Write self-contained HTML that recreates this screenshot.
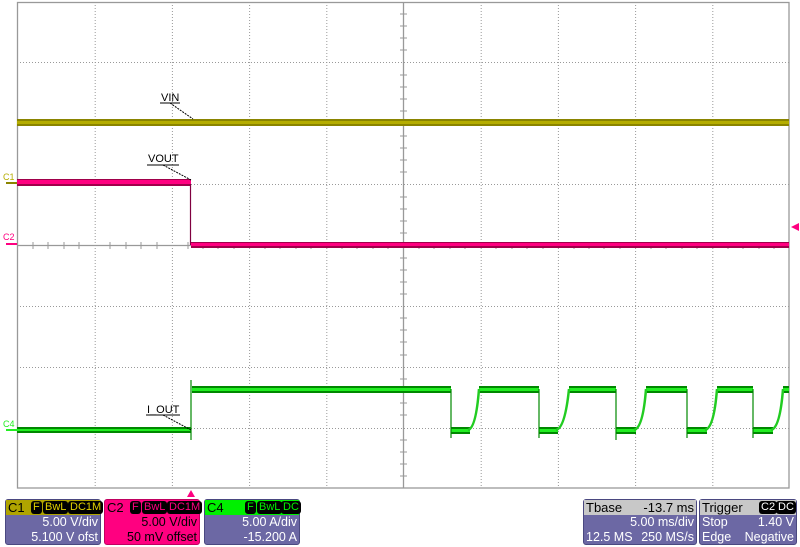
<!DOCTYPE html>
<html><head><meta charset="utf-8"><style>
html,body{margin:0;padding:0;background:#fff;width:800px;height:547px;overflow:hidden;font-family:"Liberation Sans",sans-serif;}
.box{position:absolute;top:499px;height:46px;background:#6c68a4;border-radius:3px;color:#fff;font-size:12.5px;box-sizing:border-box;border:1px solid #4a4880}
.hd{height:15px;line-height:15px;font-size:13px;padding-left:2px;position:relative}
.r{text-align:right;padding-right:2px;line-height:15px;height:15px}
.tag{position:absolute;top:1px;font-size:11px;line-height:13px;background:#000;border-radius:3px;padding:0 2px}
</style></head><body>
<svg width="800" height="547" style="position:absolute;left:0;top:0">
<g stroke="#999" stroke-width="1" stroke-dasharray="1,2" fill="none">
<line x1="95.2" y1="2" x2="95.2" y2="488"/><line x1="172.4" y1="2" x2="172.4" y2="488"/><line x1="249.6" y1="2" x2="249.6" y2="488"/><line x1="326.8" y1="2" x2="326.8" y2="488"/><line x1="481.2" y1="2" x2="481.2" y2="488"/><line x1="558.4" y1="2" x2="558.4" y2="488"/><line x1="635.6" y1="2" x2="635.6" y2="488"/><line x1="712.8" y1="2" x2="712.8" y2="488"/>
<line x1="17" y1="62.5" x2="789" y2="62.5"/><line x1="17" y1="123.5" x2="789" y2="123.5"/><line x1="17" y1="184.5" x2="789" y2="184.5"/><line x1="17" y1="306.5" x2="789" y2="306.5"/><line x1="17" y1="367.5" x2="789" y2="367.5"/><line x1="17" y1="428.5" x2="789" y2="428.5"/>
</g>
<g stroke="#999" stroke-width="1.3" fill="none">
<rect x="17.5" y="2.5" width="771.5" height="485.5"/>
<line x1="403.5" y1="2" x2="403.5" y2="488"/>
<line x1="17" y1="245.5" x2="789" y2="245.5"/>
</g>
<g stroke="#999" stroke-width="1">
<path d="M400 14h7M400 26h7M400 38h7M400 50h7M400 75h7M400 87h7M400 99h7M400 111h7M400 136h7M400 148h7M400 160h7M400 172h7M400 197h7M400 209h7M400 221h7M400 233h7M400 258h7M400 270h7M400 282h7M400 294h7M400 318h7M400 330h7M400 342h7M400 355h7M400 379h7M400 391h7M400 403h7M400 415h7M400 440h7M400 452h7M400 464h7M400 476h7"/>
<path d="M33 242v7M48 242v7M64 242v7M79 242v7M110 242v7M126 242v7M141 242v7M157 242v7M188 242v7M203 242v7M218 242v7M234 242v7M265 242v7M280 242v7M296 242v7M311 242v7M342 242v7M357 242v7M373 242v7M388 242v7M419 242v7M434 242v7M450 242v7M465 242v7M496 242v7M512 242v7M527 242v7M543 242v7M574 242v7M589 242v7M604 242v7M620 242v7M651 242v7M666 242v7M682 242v7M697 242v7M728 242v7M743 242v7M759 242v7M774 242v7"/>
</g>
<rect x="17" y="119" width="772" height="7" fill="#8a8400"/>
<rect x="17" y="121" width="772" height="3" fill="#b5ad00"/>
<rect x="17" y="179" width="174" height="7" fill="#a0004a"/>
<rect x="17" y="180" width="174" height="4" fill="#ff0080"/>
<line x1="190.5" y1="184" x2="190.5" y2="245" stroke="#800040" stroke-width="1.2"/>
<rect x="191" y="242" width="598" height="6" fill="#a0004a"/>
<rect x="191" y="243" width="598" height="3" fill="#ff0080"/>
<!-- green horizontals -->
<g fill="#008800">
<rect x="17" y="427" width="174" height="6"/>
<rect x="192" y="386" width="259" height="7"/>
<rect x="451" y="427" width="19" height="7"/><rect x="479" y="386" width="60" height="7"/>
<rect x="539" y="427" width="19" height="7"/><rect x="569" y="386" width="47" height="7"/>
<rect x="616" y="427" width="20" height="7"/><rect x="646" y="386" width="41" height="7"/>
<rect x="687" y="427" width="20" height="7"/><rect x="717" y="386" width="36" height="7"/>
<rect x="753" y="427" width="20" height="7"/><rect x="783" y="386" width="6" height="7"/>
</g>
<g fill="#22ee22">
<rect x="17" y="429" width="174" height="2"/>
<rect x="192" y="388" width="259" height="3"/>
<rect x="451" y="429" width="19" height="3"/><rect x="479" y="388" width="60" height="3"/>
<rect x="539" y="429" width="19" height="3"/><rect x="569" y="388" width="47" height="3"/>
<rect x="616" y="429" width="20" height="3"/><rect x="646" y="388" width="41" height="3"/>
<rect x="687" y="429" width="20" height="3"/><rect x="717" y="388" width="36" height="3"/>
<rect x="753" y="429" width="20" height="3"/><rect x="783" y="388" width="6" height="3"/>
</g>
<g stroke="#22cc22" stroke-width="2.5" fill="none">
<path d="M468 430Q476 428 479 389M556 430Q565 428 569 389M634 430Q643 428 646 389M705 430Q714 428 717 389M771 430Q780 428 783 389"/>
</g>
<g stroke="#008800" stroke-width="1.2">
<path d="M191 380V440M451 389V438M539 389V438M616 389V440M687 389V438M753 389V438"/>
</g>
<g font-family="Liberation Sans,sans-serif" font-size="11" fill="#000">
<text x="161" y="101">VIN</text><line x1="160" y1="103" x2="180" y2="103" stroke="#000"/><line x1="170" y1="103" x2="193" y2="119" stroke="#000" stroke-dasharray="2,1"/>
<text x="148" y="162">VOUT</text><line x1="147" y1="165" x2="179" y2="165" stroke="#000"/><line x1="163" y1="165" x2="191" y2="180" stroke="#000" stroke-dasharray="2,1"/>
<text x="147" y="413">I_OUT</text><line x1="146" y1="415" x2="180" y2="415" stroke="#000"/><line x1="163" y1="415" x2="191" y2="430" stroke="#000" stroke-dasharray="2,1"/>
</g>
<g font-family="Liberation Sans,sans-serif" font-size="9">
<text x="3" y="180" fill="#b5ad00">C1</text><rect x="6" y="182" width="11" height="2" fill="#8a8400"/>
<text x="3" y="240" fill="#ff0080">C2</text><rect x="6" y="243" width="11" height="2" fill="#ff0080"/>
<text x="3" y="427" fill="#22ee22">C4</text><rect x="6" y="429" width="11" height="2" fill="#22ee22"/>
</g>
<path d="M791 227L799 223V231Z" fill="#ff0080"/>
<path d="M191 490L187 497H195Z" fill="#ff0080"/>
</svg>
<div class="box" style="left:5px;width:96px">
 <div class="hd" style="background:#b0a400;color:#000">C1<span class="tag" style="left:25px;color:#e0d000">F</span><span class="tag" style="left:37px;color:#e0d000">BwL</span><span class="tag" style="left:62px;color:#e0d000">DC1M</span></div>
 <div class="r">5.00 V/div</div><div class="r">5.100 V ofst</div></div>
<div class="box" style="left:104px;width:96px;background:#ff0080;color:#000;border-color:#c00060">
 <div class="hd">C2<span class="tag" style="left:25px;color:#ff0080">F</span><span class="tag" style="left:37px;color:#ff0080">BwL</span><span class="tag" style="left:62px;color:#ff0080">DC1M</span></div>
 <div class="r">5.00 V/div</div><div class="r">50 mV offset</div></div>
<div class="box" style="left:204px;width:96px">
 <div class="hd" style="background:#00f000;color:#000">C4<span class="tag" style="left:40px;color:#00f000">F</span><span class="tag" style="left:52px;color:#00f000">BwL</span><span class="tag" style="left:76px;color:#00f000">DC</span></div>
 <div class="r">5.00 A/div</div><div class="r">-15.200 A</div></div>
<div class="box" style="left:583px;width:114px">
 <div class="hd" style="background:#c8c8c8;color:#000">Tbase<span style="position:absolute;right:2px">-13.7 ms</span></div>
 <div class="r">5.00 ms/div</div><div class="r" style="display:flex;justify-content:space-between;padding-left:2px"><span>12.5 MS</span><span>250 MS/s</span></div></div>
<div class="box" style="left:699px;width:98px">
 <div class="hd" style="background:#c8c8c8;color:#000">Trigger<span class="tag" style="left:59px;color:#fff">C2</span><span class="tag" style="left:76px;color:#fff">DC</span></div>
 <div class="r" style="display:flex;justify-content:space-between;padding-left:2px"><span>Stop</span><span>1.40 V</span></div>
 <div class="r" style="display:flex;justify-content:space-between;padding-left:2px"><span>Edge</span><span>Negative</span></div></div>
</body></html>
